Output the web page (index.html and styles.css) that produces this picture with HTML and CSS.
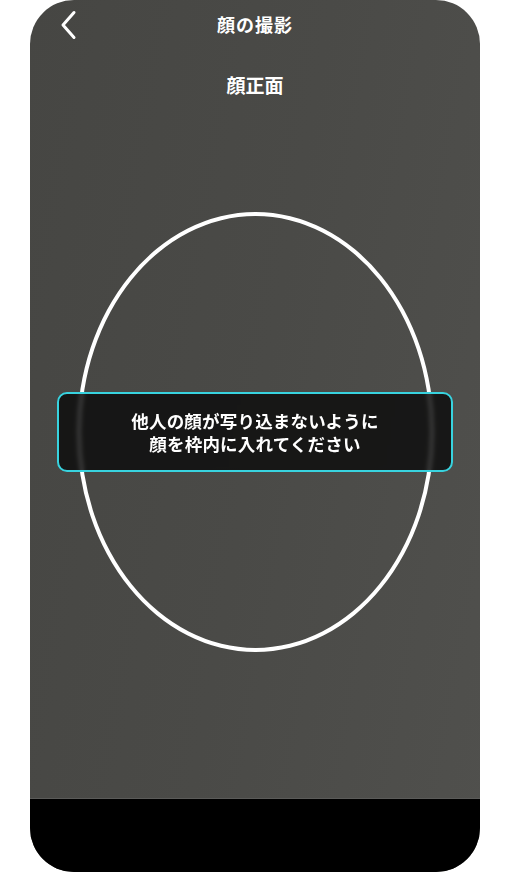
FILE: index.html
```html
<!DOCTYPE html>
<html lang="ja">
<head>
<meta charset="utf-8">
<title>顔の撮影</title>
<link rel="stylesheet" href="styles.css">
</head>
<body>
<div class="phone">
  <header class="nav">
    <button class="back" aria-label="戻る">
      <svg width="20" height="32" viewBox="0 0 20 32"><path d="M14 4.5 L3 17 L14 29.5" fill="none" stroke="#fff" stroke-width="3" stroke-linecap="round" stroke-linejoin="round"/></svg>
    </button>
    <h1 class="title">顔の撮影</h1>
    <span class="spacer"></span>
  </header>
  <div class="subtitle">顔正面</div>
  <main class="stage">
    <div class="frame">
      <div class="oval"></div>
      <div class="toast">
        <p>他人の顔が写り込まないように</p>
        <p>顔を枠内に入れてください</p>
      </div>
    </div>
  </main>
  <footer class="bottom"></footer>
</div>
</body>
</html>
```
FILE: styles.css
```css
html, body {
  margin: 0;
  padding: 0;
  background: #ffffff;
}
body {
  font-family: "Noto Sans CJK JP", "Noto Sans", sans-serif;
  width: 510px;
  height: 872px;
  overflow: hidden;
}
.phone {
  width: 450px;
  height: 872px;
  margin-left: 30px;
  border-radius: 44px;
  overflow: hidden;
  background: linear-gradient(100deg, #464643 0%, #4a4a47 50%, #50504d 100%);
  display: flex;
  flex-direction: column;
  color: #fff;
}
.nav {
  height: 48px;
  display: grid;
  grid-template-columns: 1fr auto 1fr;
  align-items: center;
  padding: 0 30px;
}
.back {
  justify-self: start;
  background: none;
  border: 0;
  padding: 0;
  width: 20px;
  height: 32px;
  display: flex;
  cursor: pointer;
}
.title {
  margin: 0;
  font-size: 18px;
  font-weight: 700;
  line-height: 24px;
  letter-spacing: 1px;
}
.subtitle {
  margin-top: 25px;
  text-align: center;
  font-size: 19px;
  font-weight: 700;
  line-height: 24px;
}
.stage {
  flex: 1;
  display: flex;
  justify-content: center;
  align-items: flex-start;
  padding-top: 115px;
}
.frame {
  position: relative;
  width: 357px;
  height: 440px;
}
.oval {
  box-sizing: border-box;
  width: 357px;
  height: 440px;
  border: 4.5px solid #ffffff;
  border-radius: 50%;
}
.toast {
  position: absolute;
  left: 50%;
  top: 50%;
  transform: translate(-50%, -50%);
  box-sizing: border-box;
  width: 396px;
  height: 80px;
  border: 2px solid #38d3df;
  border-radius: 10px;
  background: rgba(10, 10, 10, 0.8);
  backdrop-filter: blur(2px);
  display: flex;
  flex-direction: column;
  justify-content: center;
  align-items: center;
}
.toast p {
  margin: 0;
  font-size: 17.5px;
  font-weight: 700;
  line-height: 23px;
  letter-spacing: 0.2px;
}
.bottom {
  height: 73px;
  background: #000;
  border-top: 1px solid #5b5b59;
}
```
